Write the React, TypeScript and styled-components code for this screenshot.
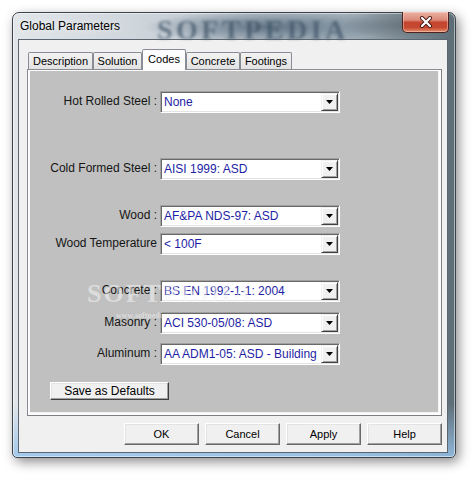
import React from "react";
import styled, { createGlobalStyle } from "styled-components";

const GlobalStyle = createGlobalStyle`
  html, body {
    margin: 0;
    padding: 0;
    background: #ffffff;
  }
  body {
    font-family: "Liberation Sans", Arial, sans-serif;
    font-size: 12px;
    color: #000;
  }
`;

const Screen = styled.div`
  width: 476px;
  height: 480px;
  box-sizing: border-box;
  padding: 12px 0 0 12px;
  background: #ffffff;
  overflow: hidden;
`;

const Window = styled.div`
  position: relative;
  width: 444px;
  height: 446px;
  box-sizing: border-box;
  border: 1px solid #3b444c;
  border-radius: 7px 7px 5px 5px;
  padding: 0 7px 4px 5px;
  display: flex;
  flex-direction: column;
  background:
    linear-gradient(to bottom, rgba(255, 255, 255, 0) 88%, rgba(150, 195, 235, 0.85) 100%),
    linear-gradient(to right, #e2e6e9 0%, #c9d1d8 35%, #a4b1bb 75%, #5d6d76 100%);
  box-shadow: 3px 4px 12px rgba(0, 0, 0, 0.45), inset 0 0 0 1px rgba(255, 255, 255, 0.5);
`;

const TitleBar = styled.div`
  position: relative;
  height: 26px;
  display: flex;
  align-items: center;
  margin: 0 -7px 0 -5px;
  padding: 0 7px;
  background:
    radial-gradient(ellipse 125px 16px at 255px 14px, rgba(70, 92, 112, 0.75), rgba(70, 92, 112, 0) 100%),
    radial-gradient(ellipse 60px 14px at 390px 12px, rgba(80, 90, 100, 0.5), rgba(80, 90, 100, 0) 100%);
  border-radius: 6px 6px 0 0;
`;

const Title = styled.span`
  position: relative;
  z-index: 1;
  font-size: 12px;
  color: #000;
  text-shadow: 0 0 6px rgba(255, 255, 255, 0.9);
`;

const TitleMark = styled.span`
  position: absolute;
  left: 144px;
  top: 3px;
  font-family: "Liberation Serif", "Times New Roman", serif;
  font-weight: bold;
  font-size: 28px;
  line-height: 28px;
  letter-spacing: 3.5px;
  color: rgba(62, 84, 104, 0.7);
  filter: blur(1.4px);
`;

const CloseButton = styled.div`
  position: absolute;
  top: -1px;
  right: 6px;
  width: 47px;
  height: 21px;
  box-sizing: border-box;
  border: 1px solid #4d2320;
  border-top: none;
  border-radius: 0 0 5px 5px;
  background: linear-gradient(
    to bottom,
    #eab1a3 0%,
    #dc8a78 40%,
    #c4452f 52%,
    #c64a32 78%,
    #e6906e 100%
  );
  box-shadow: inset 0 0 0 1px rgba(255, 220, 210, 0.45);
  display: flex;
  align-items: center;
  justify-content: center;
`;

const Client = styled.div`
  flex: 1;
  background: #f0f0f0;
  border: 1px solid #5b6670;
  display: flex;
  flex-direction: column;
  padding: 9px 5px 0 8px;
`;

const TabStrip = styled.div`
  position: relative;
  z-index: 1;
  height: 21px;
  display: flex;
  align-items: flex-end;
  padding-left: 1px;
`;

const Tab = styled.div<{ $w: number; $active?: boolean }>`
  width: ${(p) => p.$w}px;
  height: ${(p) => (p.$active ? 21 : 17)}px;
  margin-bottom: ${(p) => (p.$active ? 0 : 1)}px;
  box-sizing: border-box;
  border: 1px solid #898c95;
  border-bottom: none;
  border-radius: 2px 2px 0 0;
  background: ${(p) =>
    p.$active ? "#fcfcfc" : "linear-gradient(to bottom, #f3f3f3 0%, #ebebeb 50%, #e2e2e2 100%)"};
  display: flex;
  align-items: center;
  justify-content: center;
  padding-bottom: ${(p) => (p.$active ? 2 : 0)}px;
  font-size: 11px;
  color: #000;
  white-space: nowrap;
`;

const Panel = styled.div`
  margin-top: -1px;
  width: 415px;
  height: 347px;
  box-sizing: border-box;
  border: 1px solid #898c95;
  border-right-color: #7d7f85;
  border-bottom-color: #7d7f85;
  background: #fcfcfc;
  padding: 1px 2px 2px 2px;
  display: flex;
`;

const Sheet = styled.div`
  position: relative;
  flex: 1;
  background: #c0c0c0;
  border-right: 1px solid #f4f4f4;
  border-bottom: 1px solid #f4f4f4;
  display: flex;
  flex-direction: column;
  padding-top: 20px;
`;

const FormRow = styled.div<{ $gap: number }>`
  display: grid;
  grid-template-columns: 127px 180px;
  column-gap: 3px;
  align-items: center;
  height: 22px;
  margin-top: ${(p) => p.$gap}px;
`;

const Label = styled.span`
  text-align: right;
  white-space: nowrap;
  font-size: 12px;
  color: #151515;
  margin-top: -2px;
`;

const Combo = styled.div`
  height: 22px;
  box-sizing: border-box;
  border: 1px solid;
  border-color: #a0a0a0 #ffffff #ffffff #a0a0a0;
  box-shadow: inset 1px 1px 0 #696969, inset -1px -1px 0 #e3e3e3;
  background: #ffffff;
  display: flex;
  align-items: center;
  padding: 1px;
`;

const ComboValue = styled.span`
  flex: 1;
  padding-left: 2px;
  font-size: 12px;
  color: #1e1ea4;
  white-space: nowrap;
  overflow: hidden;
`;

const DropButton = styled.div`
  width: 17px;
  height: 18px;
  box-sizing: border-box;
  background: #f0f0f0;
  border: 1px solid;
  border-color: #f0f0f0 #404040 #404040 #f0f0f0;
  box-shadow: inset 1px 1px 0 #ffffff, inset -1px -1px 0 #a0a0a0;
  display: flex;
  align-items: center;
  justify-content: center;
`;

const SaveButton = styled.div`
  margin: 17px 0 0 20px;
  width: 119px;
  height: 18px;
  box-sizing: border-box;
  background: #f0f0f0;
  border: 1px solid;
  border-color: #ffffff #404040 #404040 #ffffff;
  box-shadow: inset -1px -1px 0 #a0a0a0, inset 1px 1px 0 #e3e3e3;
  display: flex;
  align-items: center;
  justify-content: center;
  font-size: 12px;
  color: #000;
`;

const SheetMark = styled.span<{ $size: number }>`
  position: absolute;
  font-family: "Liberation Serif", "Times New Roman", serif;
  font-weight: bold;
  font-size: ${(p) => p.$size}px;
  line-height: 1;
  letter-spacing: ${(p) => (p.$size > 12 ? 2 : 0)}px;
  color: rgba(245, 245, 245, 0.55);
  pointer-events: none;
`;

const ButtonRow = styled.div`
  width: 415px;
  margin-top: 7px;
  display: flex;
  justify-content: flex-end;
  gap: 6px;
`;

const DialogButton = styled.div`
  width: 75px;
  height: 22px;
  box-sizing: border-box;
  background: #f0f0f0;
  border: 1px solid;
  border-color: #ffffff #696969 #696969 #ffffff;
  box-shadow: inset -1px -1px 0 #a0a0a0, inset 1px 1px 0 #e3e3e3;
  display: flex;
  align-items: center;
  justify-content: center;
  font-size: 11px;
  color: #000;
`;

const tabs = [
  { name: "Description", w: 65 },
  { name: "Solution", w: 49 },
  { name: "Codes", w: 44, active: true },
  { name: "Concrete", w: 54 },
  { name: "Footings", w: 52 },
];

const rows = [
  { label: "Hot Rolled Steel :", value: "None", gap: 0 },
  { label: "Cold Formed Steel :", value: "AISI 1999: ASD", gap: 45 },
  { label: "Wood :", value: "AF&PA NDS-97: ASD", gap: 25 },
  { label: "Wood Temperature", value: "< 100F", gap: 6 },
  { label: "Concrete :", value: "BS EN 1992-1-1: 2004", gap: 25 },
  { label: "Masonry :", value: "ACI 530-05/08: ASD", gap: 10 },
  { label: "Aluminum :", value: "AA ADM1-05: ASD - Building", gap: 9 },
];

const Arrow = () => (
  <svg width="7" height="4" viewBox="0 0 7 4">
    <polygon points="0,0 7,0 3.5,4" fill="#000" />
  </svg>
);

const CloseGlyph = () => (
  <svg width="14" height="12" viewBox="0 0 14 12">
    <path d="M3 2 L11 10 M11 2 L3 10" stroke="#4a1a14" strokeWidth="4" strokeLinecap="round" />
    <path d="M3 2 L11 10 M11 2 L3 10" stroke="#ffffff" strokeWidth="2.2" strokeLinecap="round" />
  </svg>
);

export default function App() {
  return (
    <Screen>
      <GlobalStyle />
      <Window>
        <TitleBar>
          <TitleMark>SOFTPEDIA</TitleMark>
          <Title>Global Parameters</Title>
        </TitleBar>
        <CloseButton>
          <CloseGlyph />
        </CloseButton>
        <Client>
          <TabStrip>
            {tabs.map((t) => (
              <Tab key={t.name} $w={t.w} $active={t.active}>
                {t.name}
              </Tab>
            ))}
          </TabStrip>
          <Panel>
            <Sheet>
              {rows.map((r) => (
                <FormRow key={r.label} $gap={r.gap}>
                  <Label>{r.label}</Label>
                  <Combo>
                    <ComboValue>{r.value}</ComboValue>
                    <DropButton>
                      <Arrow />
                    </DropButton>
                  </Combo>
                </FormRow>
              ))}
              <SaveButton>Save as Defaults</SaveButton>
              <SheetMark $size={26} style={{ left: 57, top: 210 }}>
                SOFTPEDIA
              </SheetMark>
              <SheetMark $size={8} style={{ left: 86, top: 241 }}>
                www.softpedia.com
              </SheetMark>
            </Sheet>
          </Panel>
          <ButtonRow>
            <DialogButton>OK</DialogButton>
            <DialogButton>Cancel</DialogButton>
            <DialogButton>Apply</DialogButton>
            <DialogButton>Help</DialogButton>
          </ButtonRow>
        </Client>
      </Window>
    </Screen>
  );
}
